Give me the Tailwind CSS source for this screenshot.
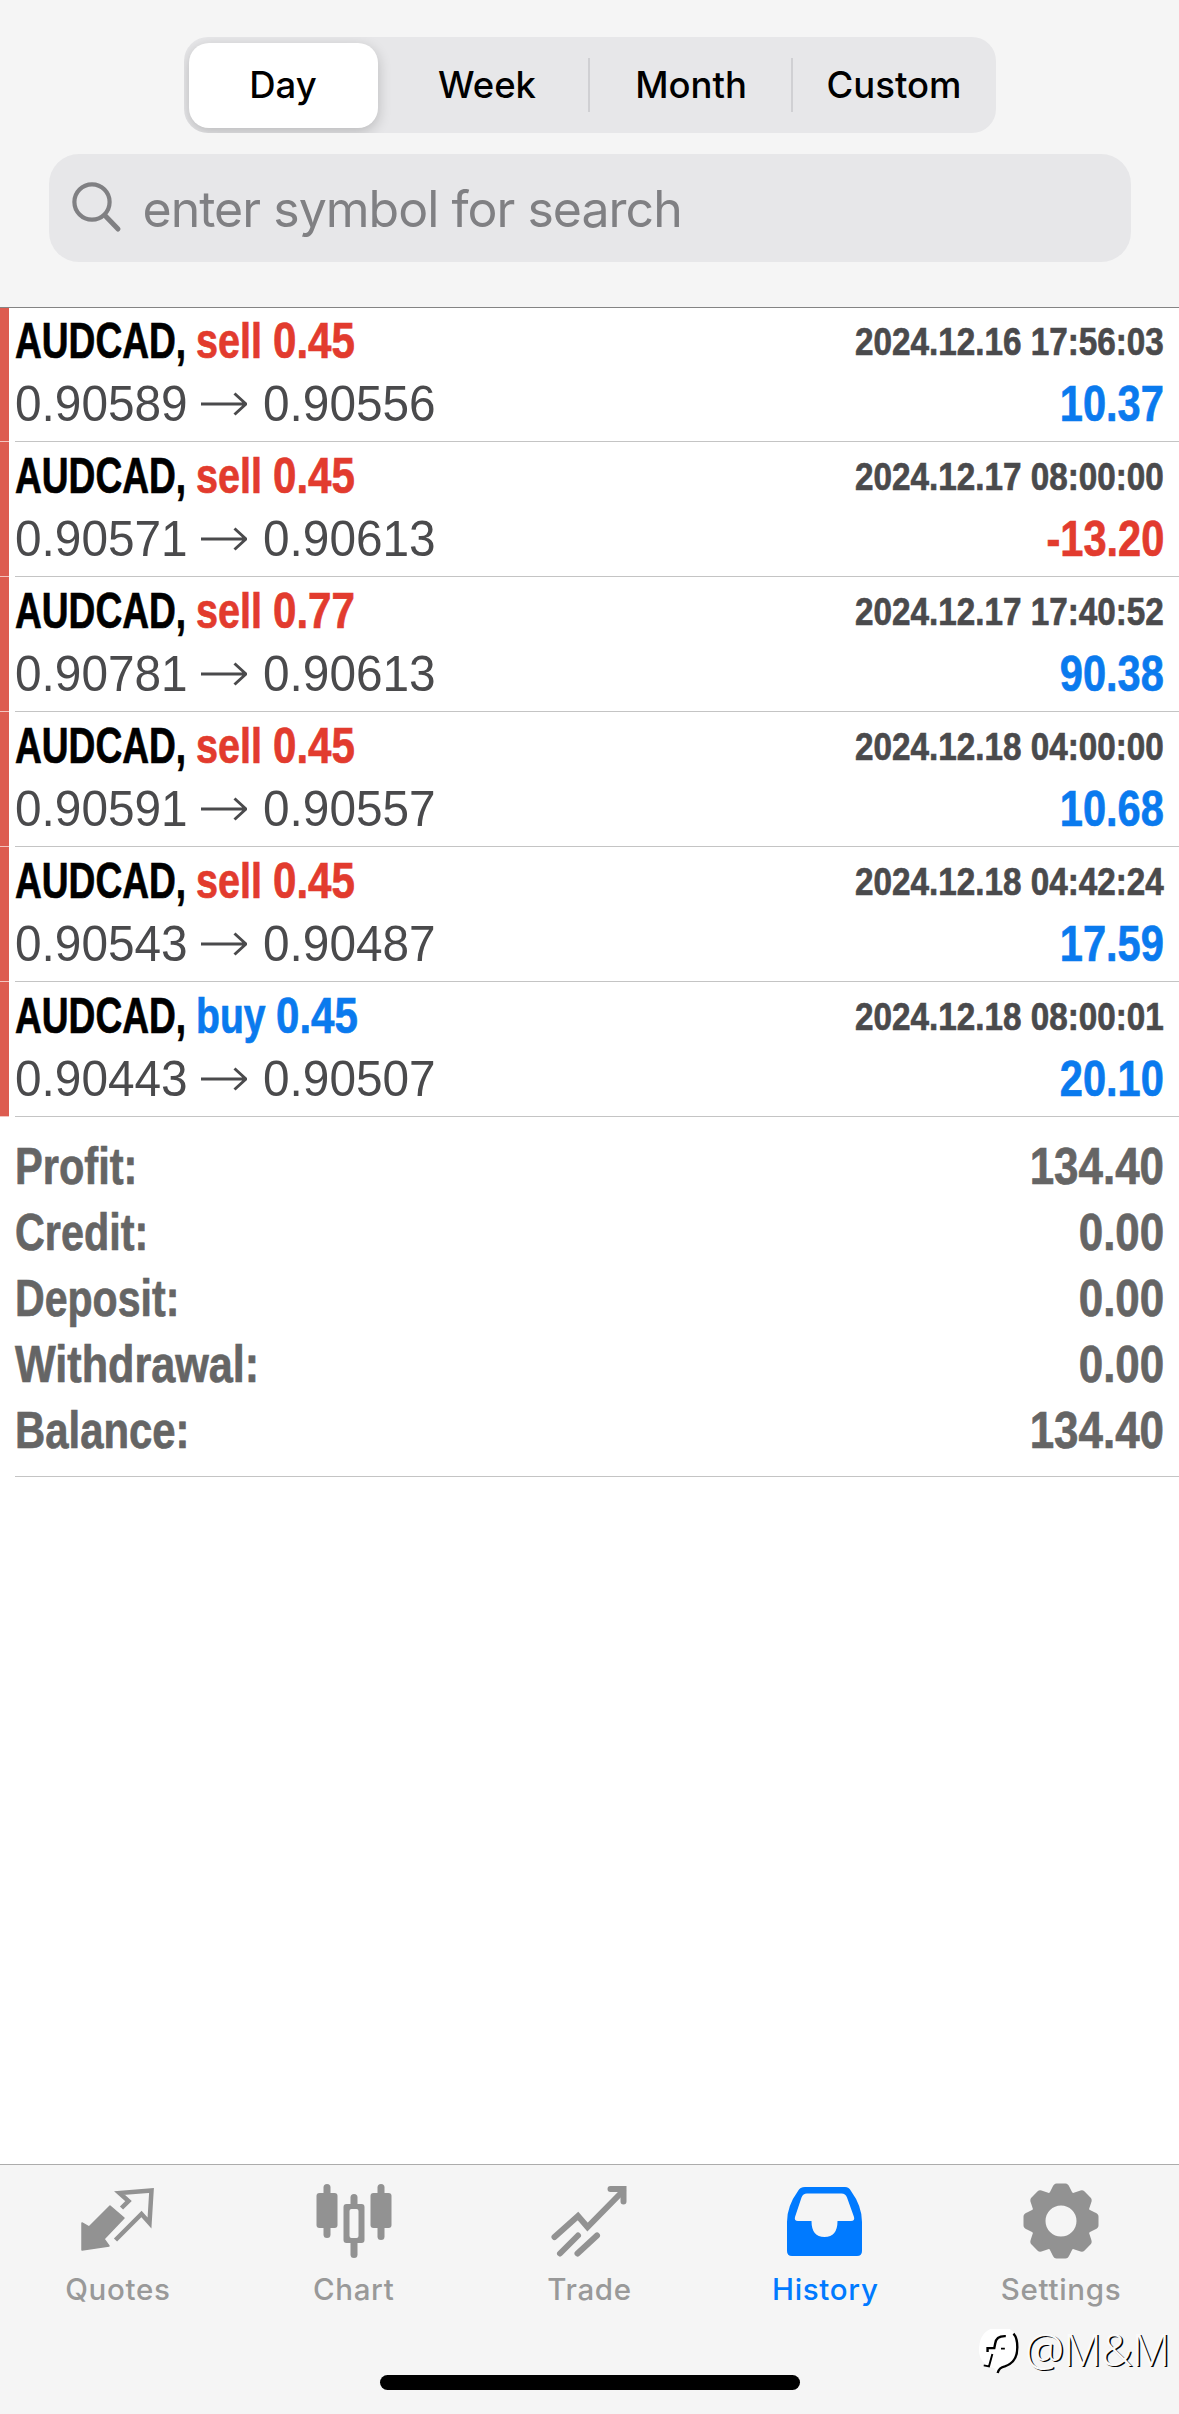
<!DOCTYPE html>
<html lang="en">
<head>
<meta charset="utf-8">
<title>History</title>
<script src="https://cdn.jsdelivr.net/npm/@tailwindcss/browser@4"></script>
</head>
<body class="bg-white">
<div class="w-[1179px] h-[2414px] flex flex-col overflow-hidden bg-white font-['Liberation_Sans',sans-serif]">
  <header class="h-[308px] shrink-0 bg-[#f5f5f5] border-b border-[#848484] flex flex-col items-center pt-[37px] font-['Inter',sans-serif]">
    <div class="w-[812px] h-24 rounded-[24px] bg-[#e7e7e9] grid grid-cols-4 items-center text-[36.5px] font-medium text-black text-center overflow-hidden">
      <div class="h-[85px] ml-[5px] mr-[9px] rounded-[20px] bg-white shadow-[0_4px_14px_rgba(0,0,0,0.2)] flex items-center justify-center"><span>Day</span></div>
      <div class="h-[54px] flex items-center justify-center border-r-2 border-[#d0d0d3]"><span>Week</span></div>
      <div class="h-[54px] flex items-center justify-center border-r-2 border-[#d0d0d3]"><span class="ml-[2px]">Month</span></div>
      <div class="h-[54px] flex items-center justify-center"><span>Custom</span></div>
    </div>
    <div class="mt-[21px] w-[1082px] h-[108px] rounded-[30px] bg-[#e7e7e9] flex items-center pl-[22px] text-[#808083]">
      <svg class="size-[52px] shrink-0" viewBox="0 0 52 52" fill="none" stroke="currentColor" stroke-width="4.2" stroke-linecap="round"><circle cx="21" cy="20" r="17.6"/><path d="M34 33.5 47 47" stroke-width="5"/></svg>
      <span class="ml-[20px] mt-[2px] text-[50px] tracking-[-0.98px] whitespace-nowrap">enter symbol for search</span>
    </div>
  </header>
  <main id="deals" class="flex flex-col shrink-0"></main>
  <section id="totals" class="ml-[15px] pr-[15px] pt-[16px] h-[360px] shrink-0 border-b border-[#c4c4c4] text-[52px] font-bold text-[#656565] [-webkit-text-stroke:0.7px]"></section>
  <div class="grow"></div>
  <footer class="h-[250px] shrink-0 border-t border-[#acacac] bg-[#f5f5f5] relative font-['Inter',sans-serif]">
    <nav class="grid grid-cols-5 text-[29.5px] font-medium tracking-[0.7px] text-[#999] text-center leading-[36px]">
      <div class="flex flex-col items-center gap-[8px] pt-[14px]">
        <svg class="w-[90px] h-[84px]" viewBox="0 0 90 84"><path d="M9 71V44l7 4 21-21 14 12-20 21 5 7z" fill="#929292" stroke="#929292" stroke-width="1.5" stroke-linejoin="round"/><path d="M48.500 29 55.500 22 46.500 14 78.500 11.500 76.500 44 68.500 35 42.500 61" fill="none" stroke="#929292" stroke-width="4.500"/></svg>
        <span>Quotes</span>
      </div>
      <div class="flex flex-col items-center gap-[8px] pt-[14px]">
        <svg class="w-[90px] h-[84px]" viewBox="0 0 90 84" fill="#929292"><rect x="7.500" y="14" width="21" height="35" rx="3"/><rect x="14.500" y="5" width="7" height="54" rx="3.500"/><rect x="61.500" y="14" width="21" height="35" rx="3"/><rect x="68.500" y="5" width="7" height="56" rx="3.500"/><path fill-rule="evenodd" d="M37.500 25h15q3 0 3 3v33q0 3-3 3h-15q-3 0-3-3V28q0-3 3-3zm3 7v25q0 2 2 2h5q2 0 2-2V32q0-2-2-2h-5q-2 0-2 2z"/><rect x="41.500" y="15" width="7" height="14" rx="3.500"/><path d="M41.500 62h7v13.500a3.500 3.500 0 0 1-7 0z"/></svg>
        <span>Chart</span>
      </div>
      <div class="flex flex-col items-center gap-[8px] pt-[14px]">
        <svg class="w-[90px] h-[84px]" viewBox="0 0 90 84" fill="none" stroke="#929292" stroke-width="6" stroke-linecap="round"><path d="M10.500 58 34 37 43.500 48 79 12"/><path d="M66.500 10H79.500V22.500"/><path d="M34 56.500 16 74.500M53 56.500 33.500 74.500"/></svg>
        <span>Trade</span>
      </div>
      <div class="flex flex-col items-center gap-[8px] pt-[14px] text-[#007aff]">
        <svg class="w-[90px] h-[84px]" viewBox="0 0 90 84" fill="currentColor"><path fill-rule="evenodd" d="M25 8H65q4 0 6 4 11 15 11 31V72q0 5-5 5H12q-5 0-5-5V43q0-16 11-31 2-4 7-4zM27 14.500q-4 0-5.500 4L15 38q-1 4 3 4H31.500q0 16 13 16t13-16H71q4 0 3-4L67 18.500q-1.500-4-5.500-4z"/></svg>
        <span>History</span>
      </div>
      <div class="flex flex-col items-center gap-[8px] pt-[14px]">
        <svg class="w-[90px] h-[84px]" viewBox="0 0 90 84"><circle cx="45" cy="42" r="23" fill="none" stroke="#929292" stroke-width="15"/><g fill="#929292"><path id="cog" d="M33 15 36.500 8q1.500-3.500 4-3.500h9q2.500 0 4 3.500L57 15z"/><use href="#cog" transform="rotate(45 45 42)"/><use href="#cog" transform="rotate(90 45 42)"/><use href="#cog" transform="rotate(135 45 42)"/><use href="#cog" transform="rotate(180 45 42)"/><use href="#cog" transform="rotate(225 45 42)"/><use href="#cog" transform="rotate(270 45 42)"/><use href="#cog" transform="rotate(315 45 42)"/></g></svg>
        <span>Settings</span>
      </div>
    </nav>
    <div class="absolute left-[380px] top-[210px] w-[420px] h-[15px] rounded-full bg-black"></div>
    <div class="absolute left-[977px] top-[161px] flex items-start">
      <svg class="w-[48px] h-[50px]" viewBox="0 0 50 52"><path d="M14 3H34Q43 8 43 22 43 38 29 42L21 49 18 44Q3 40 2 26 2 8 14 3z" fill="#fff"/><path d="M30 10.500Q20 10 19 18L18 23H11V27" fill="none" stroke="#000" stroke-width="2.500"/><path d="M16 29 12.500 42 7 41M25 23.500h4" fill="none" stroke="#000" stroke-width="2"/><path d="M38 8Q42 12 42 22 42 38 29 42 23 43 21.500 49" fill="none" stroke="#000" stroke-width="2.500"/></svg>
      <span class="mt-[-3px] text-[44px] leading-[52px] tracking-[-0.8px] font-light text-[#fafafa] font-['Noto_Sans',sans-serif] [text-shadow:1.5px_1px_0_#000]">@M&amp;M</span>
    </div>
  </footer>
</div>
<script>
const deals = [
  ['sell', '0.45', '0.90589', '0.90556', '2024.12.16 17:56:03', '10.37'],
  ['sell', '0.45', '0.90571', '0.90613', '2024.12.17 08:00:00', '-13.20'],
  ['sell', '0.77', '0.90781', '0.90613', '2024.12.17 17:40:52', '90.38'],
  ['sell', '0.45', '0.90591', '0.90557', '2024.12.18 04:00:00', '10.68'],
  ['sell', '0.45', '0.90543', '0.90487', '2024.12.18 04:42:24', '17.59'],
  ['buy', '0.45', '0.90443', '0.90507', '2024.12.18 08:00:01', '20.10'],
];
const red = 'text-[#e23b2e]', blue = 'text-[#0a7aee]';
document.getElementById('deals').innerHTML = deals.map(([side, vol, from, to, time, profit], i) => `
  <div class="${i ? 'h-[135px]' : 'h-[134px]'} flex">
    <div class="w-[9px] mr-[6px] bg-[#dd5c50] border-b border-[#f3c4be]"></div>
    <div class="grow border-b border-[#c4c4c4] pr-[15px] flex flex-col justify-end pb-[5px]">
      <div class="h-[62px] flex justify-between items-center font-bold whitespace-nowrap leading-[62px] [-webkit-text-stroke:0.7px]">
        <div class="flex items-baseline text-[49.5px]">
          <span class="w-[181px] text-black"><span class="inline-block origin-left scale-x-[.75]">AUDCAD,</span></span>
          <span class="${side === 'sell' ? 'w-[77px] ' + red : 'w-[80px] ' + blue}"><span class="inline-block origin-left ${side === 'sell' ? 'scale-x-[.80]' : 'scale-x-[.79]'}">${side}</span></span>
          <span class="${side === 'sell' ? red : blue}"><span class="inline-block origin-left scale-x-[.85]">${vol}</span></span>
        </div>
        <span class="inline-block origin-right scale-x-[.842] text-[39.5px] text-[#4a4a4c]">${time}</span>
      </div>
      <div class="h-[64px] flex justify-between items-center whitespace-nowrap leading-[64px] text-[49.5px]">
        <div class="flex items-center text-[#4a4a4c]">
          <span class="w-[184px]"><span class="inline-block origin-left scale-x-[.965]">${from}</span></span>
          <svg class="w-[48px] h-[28px]" viewBox="0 0 48 28" fill="none" stroke="currentColor" stroke-width="3"><path d="M2 14H47M35.500 3.500 47 14 35.500 24.500"/></svg>
          <span class="ml-[16px]"><span class="inline-block origin-left scale-x-[.965]">${to}</span></span>
        </div>
        <span class="inline-block origin-right scale-x-[.84] font-bold [-webkit-text-stroke:0.7px] ${profit < 0 ? red : blue}">${profit}</span>
      </div>
    </div>
  </div>`).join('');

const totals = [
  ['Profit:', '134.40', 'scale-x-[.80]'],
  ['Credit:', '0.00', 'scale-x-[.795]'],
  ['Deposit:', '0.00', 'scale-x-[.79]'],
  ['Withdrawal:', '0.00', 'scale-x-[.83]'],
  ['Balance:', '134.40', 'scale-x-[.805]'],
];
document.getElementById('totals').innerHTML = totals.map(([name, value, fit]) => `
  <div class="h-[66px] leading-[66px] flex justify-between">
    <span class="inline-block origin-left ${fit}">${name}</span>
    <span class="inline-block origin-right scale-x-[.845]">${value}</span>
  </div>`).join('');
</script>
</body>
</html>
